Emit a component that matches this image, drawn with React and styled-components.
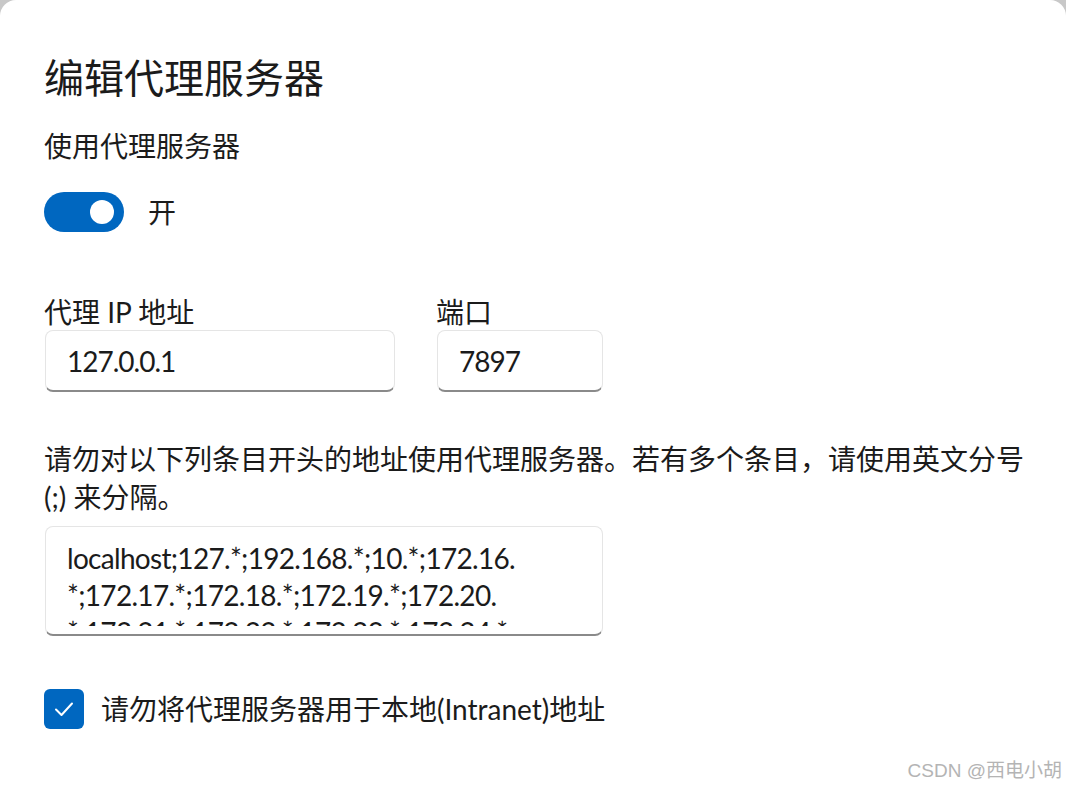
import styled, { createGlobalStyle } from "styled-components";

const GlobalStyle = createGlobalStyle`
  html, body {
    margin: 0;
    padding: 0;
    background: #c8c8c8;
  }
  * {
    box-sizing: border-box;
  }
`;

const font = `"Segoe UI", "Lato", "Noto Sans CJK SC", sans-serif`;

const Dialog = styled.div`
  width: 1066px;
  height: 790px;
  background: #ffffff;
  border-radius: 16px 16px 0 0;
  padding: 52px 44px 0 44px;
  font-family: ${font};
  color: #1b1b1b;
  position: relative;
  overflow: hidden;
`;

const Title = styled.h1`
  margin: 0;
  font-size: 40px;
  font-weight: 400;
  line-height: 52px;
`;

const SectionLabel = styled.div`
  margin-top: 22px;
  font-size: 28px;
  line-height: 40px;
`;

const ToggleRow = styled.div`
  display: flex;
  align-items: center;
  gap: 24px;
  margin-top: 26px;
`;

const Toggle = styled.div`
  width: 80px;
  height: 40px;
  border-radius: 20px;
  background: #0067c0;
  display: flex;
  align-items: center;
  justify-content: flex-end;
  padding-right: 10px;
  &::after {
    content: "";
    width: 24px;
    height: 24px;
    border-radius: 50%;
    background: #fff;
  }
`;

const ToggleText = styled.span`
  font-size: 28px;
  line-height: 40px;
`;

const FieldRow = styled.div`
  display: flex;
  gap: 41px;
  margin-top: 62px;
`;

const Field = styled.div`
  display: flex;
  flex-direction: column;
`;

const FieldLabel = styled.label`
  font-size: 28px;
  line-height: 36px;
`;

const Input = styled.div`
  width: ${(p) => p.$w}px;
  height: 62px;
  margin-left: 1px;
  border: 1px solid #e5e5e5;
  border-bottom: 2px solid #8a8a8a;
  border-radius: 8px;
  background: #fff;
  display: flex;
  align-items: center;
  padding: 0 21px;
  font-size: 28px;
  letter-spacing: -1px;
`;

const Note = styled.p`
  margin: 48px 0 0 0;
  font-size: 28px;
  line-height: 38px;
  white-space: nowrap;
`;

const TextArea = styled.div`
  width: 558px;
  height: 110px;
  margin: 10px 0 0 1px;
  border: 1px solid #e5e5e5;
  border-bottom: 2px solid #8a8a8a;
  border-radius: 8px;
  padding: 13px 20px 0 21px;
`;

const TextAreaContent = styled.div`
  height: 86px;
  font-size: 28px;
  line-height: 37px;
  letter-spacing: -0.7px;
  overflow: hidden;
  white-space: pre;
`;

const CheckRow = styled.div`
  display: flex;
  align-items: center;
  gap: 17px;
  margin-top: 53px;
`;

const CheckBox = styled.div`
  width: 40px;
  height: 40px;
  border-radius: 6px;
  background: #0067c0;
  display: flex;
  align-items: center;
  justify-content: center;
`;

const CheckText = styled.span`
  font-size: 28px;
  line-height: 40px;
`;

const Watermark = styled.div`
  position: absolute;
  right: 4px;
  bottom: 8px;
  font-size: 19px;
  color: #b4b4b4;
  font-family: "Liberation Sans", "Noto Sans CJK SC", sans-serif;
`;

const bypass = [
  "localhost;127.*;192.168.*;10.*;172.16.",
  "*;172.17.*;172.18.*;172.19.*;172.20.",
  "*;172.21.*;172.22.*;172.23.*;172.24.*",
].join("\n");

export default function App() {
  return (
    <>
      <GlobalStyle />
      <Dialog>
        <Title>编辑代理服务器</Title>
        <SectionLabel>使用代理服务器</SectionLabel>
        <ToggleRow>
          <Toggle />
          <ToggleText>开</ToggleText>
        </ToggleRow>
        <FieldRow>
          <Field>
            <FieldLabel>代理 IP 地址</FieldLabel>
            <Input $w={350}>127.0.0.1</Input>
          </Field>
          <Field>
            <FieldLabel>端口</FieldLabel>
            <Input $w={166}>7897</Input>
          </Field>
        </FieldRow>
        <Note>
          请勿对以下列条目开头的地址使用代理服务器。若有多个条目，请使用英文分号
          <br />
          (;) 来分隔。
        </Note>
        <TextArea>
          <TextAreaContent>{bypass}</TextAreaContent>
        </TextArea>
        <CheckRow>
          <CheckBox>
            <svg width="22" height="22" viewBox="0 0 22 22" fill="none">
              <path
                d="M3 11.5 L8.5 17 L19 5.5"
                stroke="#fff"
                strokeWidth="2"
                strokeLinecap="round"
                strokeLinejoin="round"
              />
            </svg>
          </CheckBox>
          <CheckText>请勿将代理服务器用于本地(Intranet)地址</CheckText>
        </CheckRow>
        <Watermark>CSDN @西电小胡</Watermark>
      </Dialog>
    </>
  );
}
